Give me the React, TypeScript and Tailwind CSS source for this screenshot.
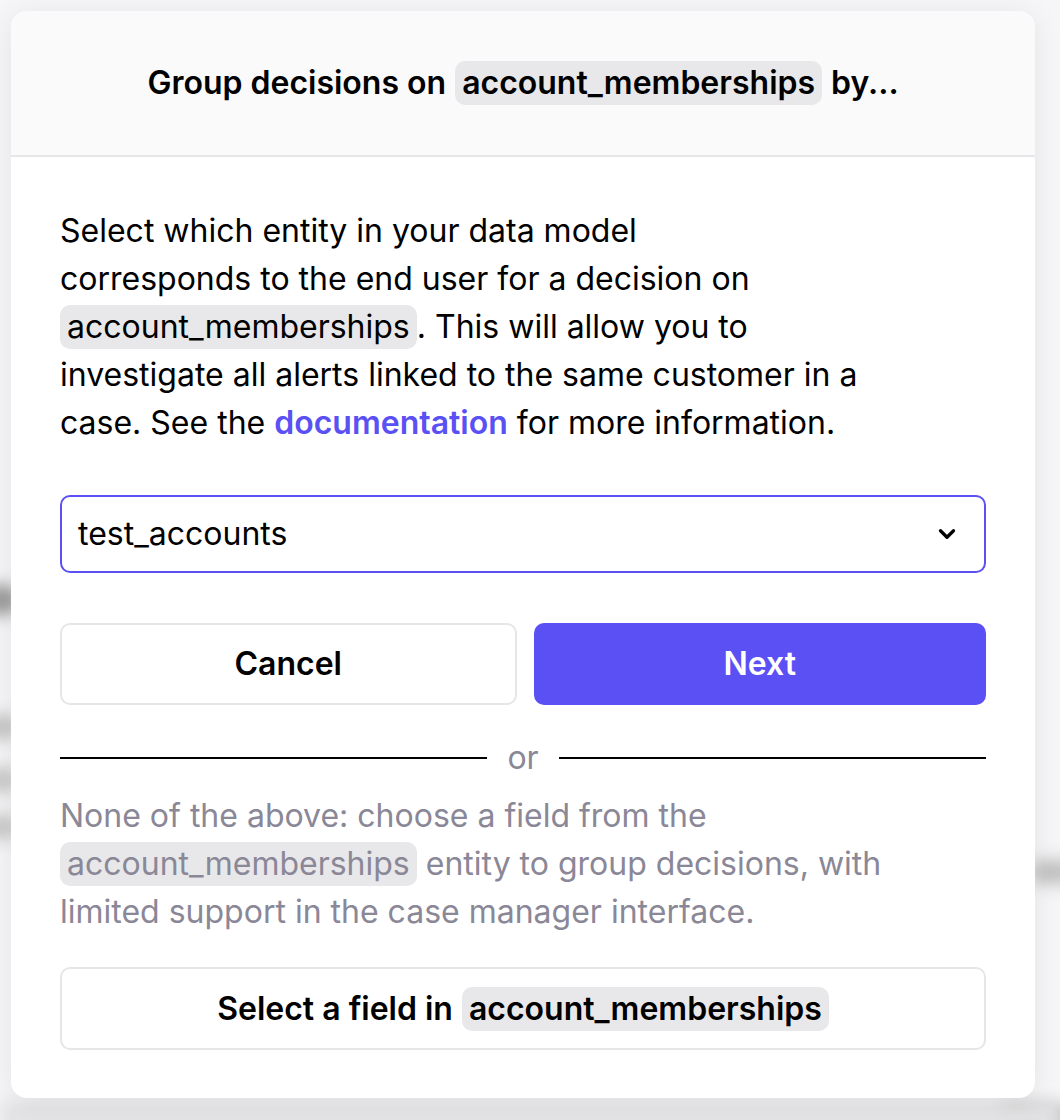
import React from 'react';
import { ChevronDown } from 'lucide-react';

const Pill: React.FC<{ children: React.ReactNode; bold?: boolean }> = ({ children, bold }) => (
  <span className={`inline-block rounded-[10px] bg-[#e8e8ea] px-[7px] leading-[44px] ${bold ? 'font-semibold' : ''}`}>
    {children}
  </span>
);

export default function App() {
  return (
    <div
      className="relative min-h-[1120px] w-[1060px] overflow-hidden bg-[#f6f6f8] pt-[11px] pl-[11px]"
      style={{ fontFamily: 'Inter, "Noto Sans", sans-serif' }}
    >
      {/* blurred page behind the modal */}
      <div className="absolute left-[-20px] top-[585px] h-[30px] w-[40px] rounded-full bg-[#9a9a9a] blur-[8px]" />
      <div className="absolute left-[-20px] top-[715px] h-[24px] w-[40px] rounded-full bg-[#c4c4c4] blur-[8px]" />
      <div className="absolute left-[-20px] top-[768px] h-[24px] w-[40px] rounded-full bg-[#c8c8c8] blur-[8px]" />
      <div className="absolute left-[-20px] top-[815px] h-[24px] w-[40px] rounded-full bg-[#c8c8c8] blur-[8px]" />
      <div className="absolute right-[-20px] top-[860px] h-[24px] w-[50px] rounded-full bg-[#c0c0c0] blur-[8px]" />
      <div className="absolute right-[-20px] top-[1105px] h-[24px] w-[80px] rounded-full bg-[#bdbdbd] blur-[8px]" />
      <div className="absolute bottom-[-12px] left-0 h-[30px] w-full bg-[#e2e2e4] blur-[8px]" />

      <div className="relative w-[1024px] overflow-hidden rounded-[16px] bg-white shadow-[0_4px_30px_rgba(0,0,0,0.08)]">
        <div className="flex h-[146px] items-center justify-center border-b-2 border-[#e6e6e8] bg-[#fafafa] text-[32px] font-semibold text-black">
          <span>Group decisions on</span>
          <span className="mx-[9px]">
            <Pill bold>account_memberships</Pill>
          </span>
          <span>by...</span>
        </div>

        <div className="flex flex-col px-[49px] pt-[50px] pb-[48px] text-[32px] leading-[48px] text-black">
          <p>
            Select which entity in your data model
            <br />
            corresponds to the end user for a decision on
            <br />
            <Pill>account_memberships</Pill>. This will allow you to
            <br />
            investigate all alerts linked to the same customer in a
            <br />
            case. See the <a className="font-semibold text-[#5a50f4]">documentation</a> for more information.
          </p>

          <div className="mt-[48px] flex h-[78px] items-center justify-between rounded-[10px] border-2 border-[#5a50f4] pl-[16px] pr-[24px]">
            <span>test_accounts</span>
            <ChevronDown size={26} strokeWidth={3} className="text-black" />
          </div>

          <div className="mt-[50px] flex gap-[17px]">
            <button className="flex h-[82px] flex-1 items-center justify-center rounded-[10px] border-2 border-[#e6e6e8] bg-white font-semibold text-black">
              Cancel
            </button>
            <button className="flex h-[82px] flex-1 items-center justify-center rounded-[10px] bg-[#5a50f4] font-semibold text-white">
              Next
            </button>
          </div>

          <div className="mt-[29px] flex items-center gap-[20px] text-[#8a8797]">
            <div className="h-[2px] flex-1 bg-black" />
            <span>or</span>
            <div className="h-[2px] flex-1 bg-black" />
          </div>

          <p className="mt-[10px] text-[#8a8797]">
            None of the above: choose a field from the <Pill>account_memberships</Pill> entity to group decisions, with
            limited support in the case manager interface.
          </p>

          <button className="mt-[31px] flex h-[83px] items-center justify-center rounded-[10px] border-2 border-[#e6e6e8] bg-white font-semibold text-black">
            <span>Select a field in</span>
            <span className="ml-[9px]">
              <Pill bold>account_memberships</Pill>
            </span>
          </button>
        </div>
      </div>
    </div>
  );
}
